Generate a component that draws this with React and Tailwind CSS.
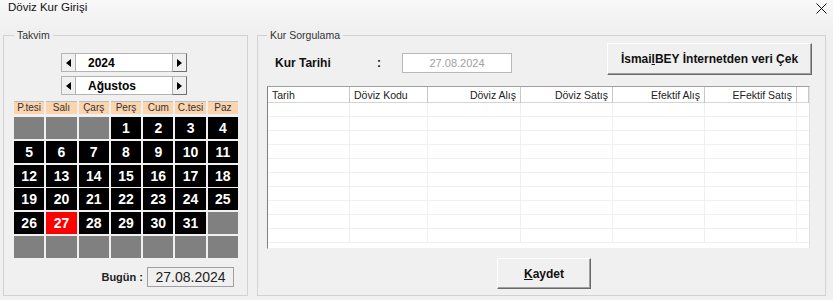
import React from "react";

const days = ["P.tesi", "Salı", "Çarş", "Perş", "Cum", "C.tesi", "Paz"];

function buildCells() {
  const cells = [];
  for (let i = 0; i < 3; i++) cells.push(null);
  for (let d = 1; d <= 31; d++) cells.push(d);
  while (cells.length < 42) cells.push(null);
  return cells;
}

function Tri({ dir }) {
  return (
    <svg width="5" height="8" viewBox="0 0 5 8">
      {dir === "left" ? (
        <polygon points="5,0 5,8 0,4" fill="#000" />
      ) : (
        <polygon points="0,0 0,8 5,4" fill="#000" />
      )}
    </svg>
  );
}

function Spinner({ value }) {
  return (
    <div className="flex h-[19px]">
      <div className="w-[15px] h-[19px] flex items-center justify-center bg-[#f0f0f0] border border-[#b4b4b4]">
        <Tri dir="left" />
      </div>
      <div className="w-[96px] h-[19px] bg-white border-y border-[#b4b4b4] pl-[12px] flex items-center text-[12px] font-bold leading-none">
        {value}
      </div>
      <div className="w-[15px] h-[19px] flex items-center justify-center bg-[#f0f0f0] border border-[#b4b4b4] border-r-[#707070] border-b-[#707070]">
        <Tri dir="right" />
      </div>
    </div>
  );
}

const cols = [
  { label: "Tarih", w: 82, align: "left" },
  { label: "Döviz Kodu", w: 78, align: "left" },
  { label: "Döviz Alış", w: 93, align: "right" },
  { label: "Döviz Satış", w: 92, align: "right" },
  { label: "Efektif Alış", w: 92, align: "right" },
  { label: "EFektif Satış", w: 92, align: "right" },
  { label: "", w: 12, align: "left" },
];

export default function App() {
  const cells = buildCells();
  return (
    <div className="w-[833px] h-[300px] bg-[#f0f0f0] text-black flex flex-col overflow-hidden font-['Liberation_Sans',Arial,sans-serif]">
      {/* title bar */}
      <div className="h-[29px] flex justify-between items-start pl-[8px] pr-[6px] bg-gradient-to-b from-[#f8f8f8] to-[#f0f0f0]">
        <div className="text-[11.5px] leading-[14px] text-[#111]">Döviz Kur Girişi</div>
        <svg width="11" height="11" viewBox="0 0 11 11" className="mt-[3px]">
          <path d="M0.5 0.5 L10.5 10.5 M10.5 0.5 L0.5 10.5" stroke="#111" strokeWidth="1" />
        </svg>
      </div>

      <div className="flex pl-[3px] gap-[9px] h-[267px]">
        {/* Takvim */}
        <fieldset className="w-[245px] h-[267px] border border-[#d2d2d2] flex flex-col">
          <legend className="ml-[10px] px-[3px] text-[10.5px] leading-[13px] text-[#333]">Takvim</legend>
          <div className="flex flex-col">
            <div className="ml-[57px] mt-[11px] flex flex-col gap-[4px]">
              <Spinner value="2024" />
              <Spinner value="Ağustos" />
            </div>
            <div className="ml-[10px] mt-[6px] w-[224px]">
              <div className="grid grid-cols-7 gap-x-[2px] h-[13px]">
                {days.map((d) => (
                  <div
                    key={d}
                    className="bg-[#fcd4ae] border-t border-[#bdbdbd] h-[13px] flex items-center justify-center text-[10px] leading-none text-[#333]"
                  >
                    {d}
                  </div>
                ))}
              </div>
              <div className="grid grid-cols-7 gap-x-[2px] gap-y-[1.8px] mt-[3px]">
                {cells.map((c, i) => {
                  let bg = "bg-[#808080]";
                  if (c !== null) bg = c === 27 ? "bg-[#ff0000]" : "bg-black";
                  return (
                    <div
                      key={i}
                      className={`${bg} h-[22px] flex items-center justify-center text-white font-bold text-[14px] leading-none`}
                    >
                      {c ?? ""}
                    </div>
                  );
                })}
              </div>
            </div>
            <div className="mt-[9px] mr-[13px] flex items-center justify-end gap-[4px]">
              <span className="text-[11px] font-bold text-[#222]">Bugün :</span>
              <div className="w-[87px] h-[20px] border border-[#a0a0a0] bg-[#f0f0f0] flex items-center justify-center text-[14px] leading-none text-[#222]">
                27.08.2024
              </div>
            </div>
          </div>
        </fieldset>

        {/* Kur Sorgulama */}
        <fieldset className="w-[569px] h-[267px] border border-[#d2d2d2] flex flex-col">
          <legend className="ml-[9px] px-[3px] text-[10.5px] leading-[13px] text-[#333]">Kur Sorgulama</legend>
          <div className="flex flex-col">
            <div className="flex justify-between items-start mt-[1px] pr-[13px]">
              <div className="flex items-center h-[20px] mt-[10px] ml-[17px]">
                <span className="w-[102px] text-[12px] font-bold text-[#111]">Kur Tarihi</span>
                <span className="w-[25px] text-[12px] font-bold text-[#111]">:</span>
                <div className="w-[110px] h-[20px] bg-white border border-[#b8b8b8] flex items-center justify-center text-[11px] text-[#a0a0a0]">
                  27.08.2024
                </div>
              </div>
              <button className="w-[205px] h-[32px] bg-[#f0f0f0] border border-t-white border-l-white border-r-[#696969] border-b-[#696969] shadow-[inset_-1px_-1px_0_#a0a0a0] text-[12px] font-bold text-[#111] flex items-center justify-center">
                <span>
                  İsmai<span className="underline">l</span>BEY İnternetden veri Çek
                </span>
              </button>
            </div>

            {/* table */}
            <div className="ml-[9px] mt-[11px] w-[543px] h-[163px] bg-white border border-t-[#a0a0a0] border-l-[#808080] border-r-[#e0e0e0] border-b-[#f0f0f0] flex flex-col overflow-hidden">
              <div className="flex h-[16px] border-b border-[#d5d5d5] shrink-0">
                {cols.map((c, i) => (
                  <div
                    key={i}
                    style={{ width: c.w }}
                    className={`h-[16px] border-r border-[#c8c8c8] flex items-center px-[4px] text-[10.5px] leading-none text-[#222] whitespace-nowrap ${
                      c.align === "right" ? "justify-end" : "justify-start"
                    }`}
                  >
                    {c.label}
                  </div>
                ))}
              </div>
              {Array.from({ length: 10 }).map((_, r) => (
                <div key={r} className="flex h-[14px] shrink-0 border-b border-[#f0f0f0]">
                  {cols.slice(0, 6).map((c, i) => (
                    <div key={i} style={{ width: c.w }} className="border-r border-[#f0f0f0]" />
                  ))}
                </div>
              ))}
            </div>

            <button className="ml-[239px] mt-[9px] w-[94px] h-[31px] bg-[#f0f0f0] border border-t-white border-l-white border-r-[#696969] border-b-[#696969] shadow-[inset_-1px_-1px_0_#a0a0a0] text-[12px] font-bold text-[#111] flex items-center justify-center">
              <span>
                <span className="underline">K</span>aydet
              </span>
            </button>
          </div>
        </fieldset>
      </div>
    </div>
  );
}
